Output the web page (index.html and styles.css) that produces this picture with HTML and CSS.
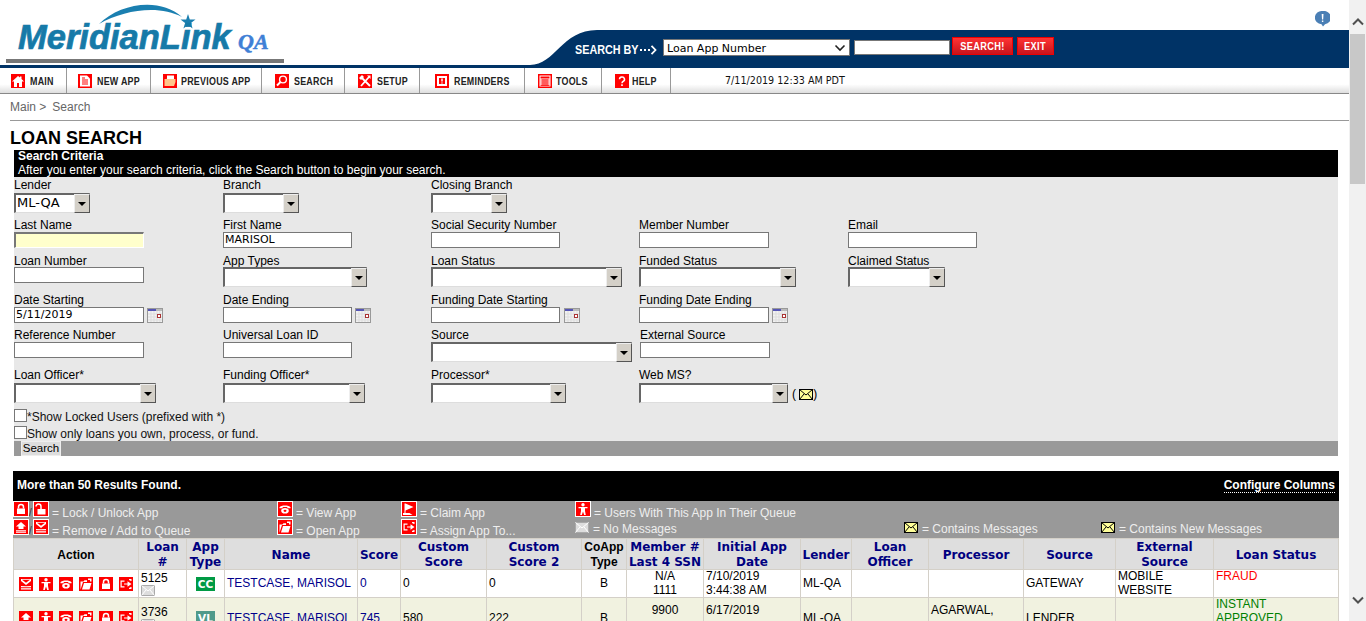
FILE: index.html
```html
<!DOCTYPE html>
<html lang="en">
<head>
<meta charset="utf-8">
<title>Loan Search</title>
<link rel="stylesheet" href="styles.css">
</head>
<body>
<svg class="defs" aria-hidden="true">
  <symbol id="lock" viewBox="0 0 14 14"><rect width="14" height="14" fill="#f00"/><path d="M4.500 6.500V5a2.500 2.500 0 0 1 5 0v1.500" fill="none" stroke="#fff" stroke-width="1.500"/><rect x="3" y="6.500" width="8" height="5.500" fill="#fff"/></symbol>
  <symbol id="unlock" viewBox="0 0 14 14"><rect width="14" height="14" fill="#f00"/><path d="M2 4.500a2.500 2.500 0 0 1 5 0V7" fill="none" stroke="#fff" stroke-width="1.500"/><rect x="3.500" y="7" width="8" height="5.500" fill="#fff"/></symbol>
  <symbol id="qadd" viewBox="0 0 14 14"><rect width="14" height="14" fill="#f00"/><path d="M2 2h10v2L7 8 2 4z" fill="#fff"/><path d="M3 2.800l4 3 4-3z" fill="#f00"/><path d="M2 9l5 .2L12 9v1.200H2zM2 11.200h10v1.300H2z" fill="#fff"/></symbol>
  <symbol id="qrem" viewBox="0 0 14 14"><rect width="14" height="14" fill="#f00"/><path d="M7 2l5 4.500H9.500V9h-5V6.500H2z" fill="#fff"/><path d="M2 10.200h10v1H2zM2 11.800h10v.9H2z" fill="#fff"/></symbol>
  <symbol id="person" viewBox="0 0 14 14"><rect width="14" height="14" fill="#f00"/><circle cx="7" cy="2.700" r="1.700" fill="#fff"/><path d="M2.500 5h9v1.300H9V9l.8 4H8.200L7 9.500 5.800 13H4.200L5 9V6.300H2.500z" fill="#fff"/></symbol>
  <symbol id="view" viewBox="0 0 14 14"><rect width="14" height="14" fill="#f00"/><path d="M1.500 5.200C3 2.800 11 2.800 12.500 5.200v1h-2.700L9 5H5l-.8 1.200H1.500z" fill="#fff"/><ellipse cx="7" cy="8.800" rx="3.800" ry="2.800" fill="#fff"/><ellipse cx="7" cy="8.800" rx="1.500" ry="1.100" fill="#f00"/></symbol>
  <symbol id="folder" viewBox="0 0 14 14"><rect width="14" height="14" fill="#f00"/><path d="M1.500 12.500V4.500h3l1-1.200H8v1.700H4z" fill="#fff"/><path d="M3 12.500l2-6.500h7.500l-2 6.500z" fill="#fff"/><path d="M9 1.500h3.500v3H11V3H9z" fill="#fff"/></symbol>
  <symbol id="assign" viewBox="0 0 14 14"><rect width="14" height="14" fill="#f00"/><path d="M1.500 3.500h4v1.200H2.700v4.600h2.800v1.200h-4zM5 6.400h3.500V4.200L12.500 7l-4 2.800V7.600H5z" fill="#fff"/><path d="M10 2h2.500v2H11.300V3.200H10zM10 10.800h1.300V10h1.200v2H10z" fill="#fff"/></symbol>
  <symbol id="flag" viewBox="0 0 14 14"><rect width="14" height="14" fill="#f00"/><path d="M2.500 1.500h1V11H2.500zM3.500 1.500l8 3.500-8 3.500zM1 11h6.500l3 2H1z" fill="#fff"/></symbol>
  <symbol id="env-grey" viewBox="0 0 14 11"><rect x=".5" y=".5" width="13" height="10" fill="#ddd" stroke="#aaa"/><path d="M.5.500L7 6l6.500-5.500M.5 10.500L5 5M13.500 10.500L9 5" fill="none" stroke="#fff"/></symbol>
  <symbol id="env-yel" viewBox="0 0 14 11"><rect x=".5" y=".5" width="13" height="10" fill="#ffff99" stroke="#000"/><path d="M.5.500L7 6l6.500-5.500M.5 10.500L5 5M13.500 10.500L9 5" fill="none" stroke="#000"/></symbol>
  <symbol id="cal" viewBox="0 0 16 15"><rect x=".5" y=".5" width="15" height="14" fill="#f2f2f2" stroke="#999"/><rect x="1" y="1" width="8" height="2" fill="#5555b5"/><rect x="9" y="1" width="6" height="2" fill="#bbb"/><path d="M1 6h14M1 9h14M1 12h14M4 3v11M7 3v11M10 3v11M13 3v11" stroke="#ddd"/><rect x="10.500" y="6.500" width="3" height="3" fill="#fff" stroke="#a33"/></symbol>
</svg>

<div class="page">
  <main class="content">
    <header class="top">
      <div class="alert-row">
        <svg class="alert" viewBox="0 0 15 16"><path d="M7.500 0a7 6.500 0 0 1 2.500 13.300L8 15.500l-1.500-2.300A7 6.500 0 0 1 7.500 0z" fill="#4a7fb5"/><path d="M6.700 3h1.800l-.3 5.500H7zM6.900 9.500h1.400v1.500H6.900z" fill="#fff"/></svg>
      </div>
      <svg class="logo" viewBox="0 0 290 65" role="img" aria-label="MeridianLink QA">
        <path d="M99 24C120 3 160 -3 182 17C160 5 125 9 99 24z" fill="#1a7fb0"/>
        <path d="M188 14l1.800 5.500h5.700l-4.600 3.400 1.700 5.500-4.600-3.400-4.600 3.400 1.700-5.500-4.600-3.400h5.700z" fill="#1a7fb0"/>
        <text class="logo-main" x="18" y="49">MeridianLink</text>
        <text class="logo-qa" x="238" y="49">QA</text>
        <rect x="6" y="59" width="278" height="4" fill="#777"/>
      </svg>
      <div class="band">
        <svg class="band-curve" viewBox="0 0 70 35" preserveAspectRatio="none"><path d="M0 35C25 35 32 0 67 0H70V35z" fill="#003366"/></svg>
        <div class="band-body">
          <span class="search-by"><span class="sb-text">SEARCH BY</span><svg class="sb-arrow" viewBox="0 0 17 10"><path d="M0 4h2v2H0zM4 4h2v2H4zM8 4h2v2H8z" fill="#fff"/><path d="M11.500 .8L15.500 5l-4 4.200" fill="none" stroke="#fff" stroke-width="1.800"/></svg></span>
          <span class="top-select">Loan App Number<svg class="chev" viewBox="0 0 12 8"><path d="M1.500 1.500L6 6l4.500-4.500" fill="none" stroke="#222" stroke-width="1.600"/></svg></span>
          <span class="top-input"></span>
          <span class="red-btn btn-search"><span class="btn-t">SEARCH!</span></span>
          <span class="red-btn btn-exit"><span class="btn-t">EXIT</span></span>
        </div>
      </div>
    </header>
    <div class="rule-blue"></div>

    <nav class="nav">
      <a class="nav-item n1"><svg class="nav-ic" viewBox="0 0 14 14"><rect width="14" height="14" fill="#f00"/><path d="M7 2L1 7.500h2V13h3V9h2v4h3V7.500h2L10.500 5V2.500H9v1z" fill="#fff"/></svg><span class="nt">MAIN</span></a>
      <a class="nav-item n2"><svg class="nav-ic" viewBox="0 0 14 14"><rect width="14" height="14" fill="#f00"/><path d="M2 1.500h7l3 3V12.500H2z" fill="#fff"/><path d="M4 6h6M4 8h6M4 10h6M4 4h3" stroke="#f00"/></svg><span class="nt">NEW APP</span></a>
      <a class="nav-item n3"><svg class="nav-ic" viewBox="0 0 14 14"><rect width="14" height="14" fill="#f00"/><path d="M1.500 12V5h2l1-1h6v1h2v3l-1.500 4z" fill="#ffc48a"/><path d="M4 1.500h7V5H4z" fill="#fff"/></svg><span class="nt">PREVIOUS APP</span></a>
      <a class="nav-item n4"><svg class="nav-ic" viewBox="0 0 14 14"><rect width="14" height="14" fill="#f00"/><circle cx="8" cy="5.500" r="3.400" fill="none" stroke="#fff" stroke-width="1.400"/><path d="M5.500 8L2 11.500" stroke="#fff" stroke-width="2"/></svg><span class="nt">SEARCH</span></a>
      <a class="nav-item n5"><svg class="nav-ic" viewBox="0 0 14 14"><rect width="14" height="14" fill="#f00"/><path d="M3 3l9 9M11 3l-8 9" stroke="#fff" stroke-width="1.800"/><path d="M1 4l3-3 2 2-3 3zM9 1.500h3.500V5z" fill="#fff"/></svg><span class="nt">SETUP</span></a>
      <a class="nav-item n6"><svg class="nav-ic" viewBox="0 0 14 14"><rect width="14" height="14" fill="#f00"/><rect x="2" y="2" width="10" height="10" fill="#fff"/><rect x="4" y="4" width="6" height="6" fill="#f00"/><path d="M7 4.500v3M7 8.500v1" stroke="#fff" stroke-width="1.500"/></svg><span class="nt">REMINDERS</span></a>
      <a class="nav-item n7"><svg class="nav-ic" viewBox="0 0 14 14"><rect width="14" height="14" fill="#f00"/><rect x="1.500" y="1.500" width="11" height="11" fill="#fff"/><rect x="2.500" y="2.500" width="9" height="2" fill="#f00"/><path d="M2.500 6h9M2.500 8h9M2.500 10h9M2.500 11.500h9M5 5v6.500M7 5v6.500M9 5v6.500" stroke="#f00" stroke-width=".8"/></svg><span class="nt">TOOLS</span></a>
      <a class="nav-item n8"><svg class="nav-ic" viewBox="0 0 14 14"><rect width="14" height="14" fill="#f00"/><path d="M4.500 5.300a2.500 2.300 0 1 1 3.500 2.200c-.8.400-1 .8-1 1.800" fill="none" stroke="#fff" stroke-width="1.500"/><rect x="6.200" y="10.300" width="1.600" height="1.700" fill="#fff"/></svg><span class="nt">HELP</span></a>
      <span class="nav-date">7/11/2019 12:33 AM PDT</span>
    </nav>

    <div class="crumbs"><span>Main &gt;</span><span>Search</span></div>
    <h1 class="title">LOAN SEARCH</h1>

    <section class="criteria">
      <div class="crit-head"><b>Search Criteria</b><span>After you enter your search criteria, click the Search button to begin your search.</span></div>
      <div class="crit-body">
        <div class="frow r1">
          <div class="field"><label>Lender</label><span class="sel w76 sel-val">ML-QA<i class="sel-btn"></i></span></div>
          <div class="field"><label>Branch</label><span class="sel w76"><i class="sel-btn"></i></span></div>
          <div class="field"><label>Closing Branch</label><span class="sel w76"><i class="sel-btn"></i></span></div>
        </div>
        <div class="frow r2">
          <div class="field"><label>Last Name</label><span class="inp inp-req"></span></div>
          <div class="field"><label>First Name</label><span class="inp">MARISOL</span></div>
          <div class="field"><label>Social Security Number</label><span class="inp"></span></div>
          <div class="field"><label>Member Number</label><span class="inp"></span></div>
          <div class="field"><label>Email</label><span class="inp"></span></div>
        </div>
        <div class="frow r3">
          <div class="field"><label>Loan Number</label><span class="inp"></span></div>
          <div class="field"><label>App Types</label><span class="sel w144"><i class="sel-btn"></i></span></div>
          <div class="field"><label>Loan Status</label><span class="sel w191"><i class="sel-btn"></i></span></div>
          <div class="field"><label>Funded Status</label><span class="sel w157"><i class="sel-btn"></i></span></div>
          <div class="field"><label>Claimed Status</label><span class="sel w97"><i class="sel-btn"></i></span></div>
        </div>
        <div class="frow r4">
          <div class="field"><label>Date Starting</label><div class="dated"><span class="inp">5/11/2019</span><svg class="cal"><use href="#cal"/></svg></div></div>
          <div class="field"><label>Date Ending</label><div class="dated"><span class="inp"></span><svg class="cal"><use href="#cal"/></svg></div></div>
          <div class="field"><label>Funding Date Starting</label><div class="dated"><span class="inp"></span><svg class="cal cal-far"><use href="#cal"/></svg></div></div>
          <div class="field"><label>Funding Date Ending</label><div class="dated"><span class="inp inp-wide"></span><svg class="cal"><use href="#cal"/></svg></div></div>
        </div>
        <div class="frow r5">
          <div class="field"><label>Reference Number</label><span class="inp"></span></div>
          <div class="field"><label>Universal Loan ID</label><span class="inp"></span></div>
          <div class="field"><label>Source</label><span class="sel w201"><i class="sel-btn"></i></span></div>
          <div class="field nudge"><label>External Source</label><span class="inp"></span></div>
        </div>
        <div class="frow r6">
          <div class="field"><label>Loan Officer*</label><span class="sel w142"><i class="sel-btn"></i></span></div>
          <div class="field"><label>Funding Officer*</label><span class="sel w142"><i class="sel-btn"></i></span></div>
          <div class="field"><label>Processor*</label><span class="sel w135"><i class="sel-btn"></i></span></div>
          <div class="field"><label>Web MS?</label><div class="dated"><span class="sel w149"><i class="sel-btn"></i></span><span class="paren">( <svg class="env"><use href="#env-yel"/></svg>)</span></div></div>
        </div>
        <div class="check"><i class="box"></i>*Show Locked Users (prefixed with *)</div>
        <div class="check"><i class="box"></i>Show only loans you own, process, or fund.</div>
      </div>
      <div class="crit-foot"><span class="search-btn">Search</span></div>
    </section>

    <section class="results">
      <div class="res-head"><b>More than 50 Results Found.</b><a class="config">Configure Columns</a></div>
      <div class="legend">
        <div class="lg lg1"><svg class="lic"><use href="#lock"/></svg><em>/</em><svg class="lic"><use href="#unlock"/></svg><span>= Lock / Unlock App</span></div>
        <div class="lg lg2"><svg class="lic"><use href="#view"/></svg><span>= View App</span></div>
        <div class="lg lg3"><svg class="lic"><use href="#flag"/></svg><span>= Claim App</span></div>
        <div class="lg lg4"><svg class="lic"><use href="#person"/></svg><span>= Users With This App In Their Queue</span></div>
        <div class="lg lg1"><svg class="lic"><use href="#qrem"/></svg><em>/</em><svg class="lic"><use href="#qadd"/></svg><span>= Remove / Add to Queue</span></div>
        <div class="lg lg2"><svg class="lic"><use href="#folder"/></svg><span>= Open App</span></div>
        <div class="lg lg3"><svg class="lic"><use href="#assign"/></svg><span>= Assign App To...</span></div>
        <div class="lg lg4 lg-env"><svg class="env"><use href="#env-grey"/></svg><span>= No Messages</span></div>
        <div class="lg lg5 lg-env"><svg class="env"><use href="#env-yel"/></svg><span>= Contains Messages</span></div>
        <div class="lg lg6 lg-env"><svg class="env"><use href="#env-yel"/></svg><span>= Contains New Messages</span></div>
      </div>
      <table class="grid">
        <colgroup>
          <col class="c125"><col class="c48"><col class="c38"><col class="c133"><col class="c43"><col class="c86"><col class="c95"><col class="c45"><col class="c77"><col class="c97"><col class="c51"><col class="c77"><col class="c95"><col class="c92"><col class="c98"><col class="c125">
        </colgroup>
        <thead>
          <tr>
            <th class="plain">Action</th><th>Loan<br>#</th><th>App<br>Type</th><th>Name</th><th>Score</th><th>Custom<br>Score</th><th>Custom<br>Score 2</th><th class="plain">CoApp<br>Type</th><th>Member #<br>Last 4 SSN</th><th>Initial App<br>Date</th><th>Lender</th><th>Loan<br>Officer</th><th>Processor</th><th>Source</th><th>External<br>Source</th><th>Loan Status</th>
          </tr>
        </thead>
        <tbody>
          <tr class="row-a">
            <td class="acts"><svg class="aic"><use href="#qadd"/></svg><svg class="aic"><use href="#person"/></svg><svg class="aic"><use href="#view"/></svg><svg class="aic"><use href="#folder"/></svg><svg class="aic"><use href="#lock"/></svg><svg class="aic"><use href="#assign"/></svg></td>
            <td class="loan">5125<svg class="env"><use href="#env-grey"/></svg></td>
            <td class="bd"><span class="badge cc">CC</span></td>
            <td><a class="nm">TESTCASE, MARISOL</a></td><td><a class="nm">0</a></td><td>0</td><td>0</td><td class="ctr">B</td>
            <td class="ctr">N/A<br>1111</td><td>7/10/2019<br>3:44:38 AM</td><td>ML-QA</td><td></td><td></td><td>GATEWAY</td><td>MOBILE<br>WEBSITE</td><td class="st fraud">FRAUD</td>
          </tr>
          <tr class="row-b">
            <td class="acts"><svg class="aic"><use href="#qrem"/></svg><svg class="aic"><use href="#person"/></svg><svg class="aic"><use href="#view"/></svg><svg class="aic"><use href="#folder"/></svg><svg class="aic"><use href="#lock"/></svg><svg class="aic"><use href="#assign"/></svg></td>
            <td class="loan">3736<svg class="env"><use href="#env-grey"/></svg></td>
            <td class="bd"><span class="badge vl">VL</span></td>
            <td><a class="nm">TESTCASE, MARISOL</a></td><td><a class="nm">745</a></td><td>580</td><td>222</td><td class="ctr">B</td>
            <td class="ctr two">9900<br>&nbsp;</td><td class="two">6/17/2019<br>&nbsp;</td><td>ML-QA</td><td></td><td class="two">AGARWAL,<br>&nbsp;</td><td>LENDER</td><td></td><td class="st ok">INSTANT<br>APPROVED</td>
          </tr>
        </tbody>
      </table>
    </section>
  </main>
  <aside class="scroll">
    <svg class="sc-arrow sc-up" viewBox="0 0 12 8"><path d="M1 6.500L6 1.500l5 5" fill="none" stroke="#505050" stroke-width="2"/></svg>
    <div class="sc-thumb"></div>
    <svg class="sc-arrow sc-down" viewBox="0 0 12 8"><path d="M1 1.500l5 5 5-5" fill="none" stroke="#505050" stroke-width="2"/></svg>
  </aside>
</div>
</body>
</html>
```
FILE: styles.css
```css
* { box-sizing: border-box; }
html, body { margin: 0; height: 621px; overflow: hidden; }
body { font: 12px/14px "Liberation Sans", Arial, sans-serif; color: #000; background: #fff; }
.defs { width: 0; height: 0; position: absolute; }
.page { display: flex; height: 621px; overflow: hidden; }
.content { width: 1349px; flex: none; }

/* header */
.top { position: relative; height: 65px; }
.alert-row { height: 30px; display: flex; justify-content: flex-end; align-items: flex-start; padding: 11px 19px 0 0; }
.alert { width: 15px; height: 16px; display: block; }
.logo { position: absolute; left: 0; top: 0; width: 290px; height: 65px; }
.logo-main { font: italic bold 34.500px "Liberation Sans", sans-serif; fill: #167aa8; stroke: #167aa8; stroke-width: .7px; }
.logo-qa { font: italic bold 22px "Liberation Serif", serif; fill: #3f80d6; stroke: #3f80d6; stroke-width: .5px; }
.band { display: flex; height: 35px; margin-left: 530px; }
.band-curve { width: 70px; height: 35px; display: block; flex: none; }
.band-body { flex: 1; background: #003366; display: flex; align-items: flex-start; }
.search-by { width: 88px; flex: none; margin: 12px 0 0 -25px; display: flex; align-items: center; height: 15px; }
.sb-text { flex: none; width: 65px; font: bold 13px/15px "Liberation Sans", sans-serif; color: #fff; white-space: nowrap; transform: scaleX(.83); transform-origin: left center; }
.sb-arrow { width: 17px; height: 10px; flex: none; }
.top-select { width: 187px; height: 17px; margin-top: 9px; background: #fff; border: 1px solid #777; font: 11px/15px "DejaVu Sans", sans-serif; padding: 1px 0 0 3px; display: flex; justify-content: space-between; align-items: center; flex: none; }
.chev { width: 12px; height: 8px; margin-right: 3px; }
.top-input { width: 96px; height: 15px; margin: 10px 0 0 4px; background: #fff; border: 1px solid #777; flex: none; }
.red-btn { height: 18px; margin-top: 7px; background: linear-gradient(#f33, #c8141c); border: 1px solid #e00; flex: none; display: flex; justify-content: center; }
.btn-t { color: #fff; font: bold 11px/16px "Liberation Sans", sans-serif; letter-spacing: .4px; transform: scaleX(.84); white-space: nowrap; }
.btn-search { width: 61px; margin-left: 2px; }
.btn-exit { width: 37px; margin-left: 4px; }
.rule-blue { height: 3px; background: #003366; }

/* nav */
.nav { display: flex; align-items: stretch; height: 26px; border-bottom: 1px solid #888; background: linear-gradient(#fff 0, #fff 65%, #dedede 100%); }
.nav-item { display: flex; align-items: center; gap: 5px; border-right: 1px solid #999; flex: none; color: #222; white-space: nowrap; }
.nt { font: bold 11px/14px "Liberation Sans", sans-serif; letter-spacing: .3px; transform: scaleX(.81); transform-origin: left center; }
.nav-ic { width: 14px; height: 14px; flex: none; }
.n1 { width: 67px; padding-left: 11px; }
.n2 { width: 84px; padding-left: 11px; }
.n3 { width: 111px; padding-left: 12px; gap: 4px; }
.n4 { width: 83px; padding-left: 13px; }
.n5 { width: 75px; padding-left: 13px; }
.n6 { width: 105px; padding-left: 15px; }
.n7 { width: 77px; padding-left: 13px; gap: 4px; }
.n8 { width: 69px; padding-left: 13px; gap: 3px; }
.nav-date { font: 9.600px/25px "DejaVu Sans", sans-serif; margin-left: 54px; color: #111; }

/* crumbs + title */
.crumbs { margin-left: 10px; height: 27px; border-bottom: 1px solid #999; display: flex; gap: 6px; color: #666; line-height: 26px; }
.title { margin: 0 0 0 10px; font: bold 18px/29px "Liberation Sans", sans-serif; height: 29px; padding-top: 3px; }

/* criteria */
.criteria { margin: 0 11px 0 14px; }
.crit-head { background: #000; color: #fff; height: 27px; padding-left: 4px; }
.crit-head b, .crit-head span { display: block; }
.crit-head b { line-height: 13px; }
.crit-body { background: #e8e8e8; height: 264px; padding-top: 1px; }
.frow { display: grid; grid-template-columns: 209px 208px 208px 209px 130px; }
.r1 { height: 40px; } .r2 { height: 36px; } .r3 { height: 39px; } .r4 { height: 35px; } .r5 { height: 40px; } .r6 { height: 39px; }
.field label { display: block; height: 14px; line-height: 14px; }
.r1 label { height: 15px; }
.r3 label { height: 13px; }
.r6 label { height: 15px; }
.dated { display: flex; align-items: flex-start; }
.inp { display: block; width: 129px; height: 16px; background: #fff; border: 1px solid #777; font: 11px/14px "DejaVu Sans", sans-serif; padding-left: 1px; flex: none; }
.field:first-child .inp, .nudge .inp, .field:nth-child(4) .inp { width: 130px; }
.nudge { margin-left: 1px; }
.field .inp-req { width: 129px; background: #ffffcc; border-style: solid; border-width: 2px 1px 1px 2px; border-color: #777 #fff #fff #777; }
.cal { width: 16px; height: 15px; margin: 1px 0 0 3px; flex: none; }
.cal-far { margin-left: 4px; }
.sel { position: relative; display: block; height: 20px; background: #fff; border-style: solid; border-width: 2px 1px 1px 2px; border-color: #666 #ddd #ddd #666; font: 13px/16px "DejaVu Sans", sans-serif; padding-left: 1px; flex: none; }
.sel-btn { position: absolute; right: -1px; top: -1px; bottom: -1px; width: 16px; background: #d4d0c8; border: 1px solid; border-color: #eee #555 #555 #eee; }
.sel-btn::after { content: ""; position: absolute; left: 3px; top: 7px; border: 4px solid transparent; border-top-color: #000; border-bottom: 0; }
.w76 { width: 76px; } .w97 { width: 97px; } .w135 { width: 135px; } .w142 { width: 142px; } .w144 { width: 144px; }
.w149 { width: 149px; } .w157 { width: 157px; } .w191 { width: 191px; } .w201 { width: 201px; }
.paren { margin: 4px 0 0 4px; display: flex; align-items: center; white-space: pre; }
.env { width: 14px; height: 11px; display: block; flex: none; }
.check { display: flex; align-items: flex-end; height: 16px; color: #111; margin-top: 1px; }
.check:first-of-type { margin-top: 0; }
.box { width: 13px; height: 13px; background: #fff; border: 1px solid #777; display: block; flex: none; margin-bottom: 2px; }
.crit-foot { background: #999; height: 15px; padding-left: 7px; }
.search-btn { display: block; width: 40px; height: 15px; background: #ddd; border: 1px solid #eee; font-size: 11.500px; line-height: 13px; text-align: center; }

/* results */
.results { margin: 15px 10px 0 13px; }
.res-head { background: #000; color: #fff; height: 30px; display: flex; justify-content: space-between; align-items: center; padding: 0 4px 2px; }
.config { font-weight: bold; color: #fff; border-bottom: 1px dotted #fff; line-height: 14px; }
.legend { background: #999; height: 37px; display: grid; grid-template-columns: 264px 124px 174px 329px 197px 1fr; grid-template-rows: 18px 19px; color: #eee; }
.lg { display: flex; align-items: flex-start; white-space: nowrap; }
.lg span { margin: 5px 0 0 3px; line-height: 14px; }
.lg em { font-style: normal; width: 4px; margin-top: 5px; font-size: 10px; color: #333; }
.lic { width: 16px; height: 16px; border: 1px solid #fff; display: block; flex: none; background: #f00; }
.lg-env .env { margin-top: 3px; }
.lg-env span { margin: 3px 0 0 4px; }
.lg1 { grid-column: 1; } .lg2 { grid-column: 2; } .lg3 { grid-column: 3; } .lg4 { grid-column: 4; }
.lg5 { grid-column: 5; grid-row: 2; }
.lg6 { grid-column: 6; grid-row: 2; }

/* table */
.grid { border-collapse: collapse; table-layout: fixed; width: 1326px; }
.c125 { width: 125px; } .c48 { width: 48px; } .c38 { width: 38px; } .c133 { width: 133px; } .c43 { width: 43px; } .c86 { width: 86px; } .c95 { width: 95px; } .c45 { width: 45px; } .c77 { width: 77px; } .c97 { width: 97px; } .c51 { width: 51px; } .c92 { width: 92px; } .c98 { width: 98px; }
.grid th, .grid td { border: 1px solid #d4d0c8; }
.grid th { background: #dedede; color: #000080; font: bold 12px/15px "DejaVu Sans", sans-serif; height: 31px; padding: 1px 0 0; overflow: hidden; white-space: nowrap; text-align: center; }
.grid th::after { content: ""; display: block; margin-top: -1px; }
.grid th.plain { font: bold 12px/15px "Liberation Sans", sans-serif; color: #000; }
.grid td { padding: 0 2px; vertical-align: middle; line-height: 14px; }
.grid td::before { content: ""; display: block; margin-top: -2px; }
.grid td.acts::before, .grid td.loan::before, .grid td.bd::before { margin-top: 0; }
.grid td.st::before { margin-top: -1px; }
.row-b td::before { margin-top: 0; }
.grid .row-b td.two::before { margin-top: -1px; }
.row-a td { background: #fff; height: 28px; }
.row-b td { background: #f1f2e0; height: 40px; }
.acts { white-space: nowrap; }
.grid td.acts { padding: 0 0 0 5px; }
.aic { width: 14px; height: 14px; margin-right: 6px; display: inline-block; vertical-align: middle; }
.ctr, .bd { text-align: center; }
.nm { color: #00008b; }
.grid td.st { vertical-align: top; }
.fraud { color: #f00; }
.ok { color: #008000; }
.badge { display: inline-block; width: 19px; height: 14px; color: #fff; font: bold 10.500px/14px "DejaVu Sans", sans-serif; text-align: center; vertical-align: middle; }
.cc { background: #009a44; }
.vl { background: #4f9a8a; }

/* scrollbar */
.scroll { width: 17px; flex: none; background: #f1f1f1; display: flex; flex-direction: column; align-items: center; height: 621px; }
.sc-arrow { width: 12px; height: 8px; flex: none; }
.sc-up { margin-top: 18px; }
.sc-thumb { width: 15px; height: 150px; margin-top: 8px; background: #c8c8c8; }
.sc-down { margin-top: auto; margin-bottom: 17px; }
```
